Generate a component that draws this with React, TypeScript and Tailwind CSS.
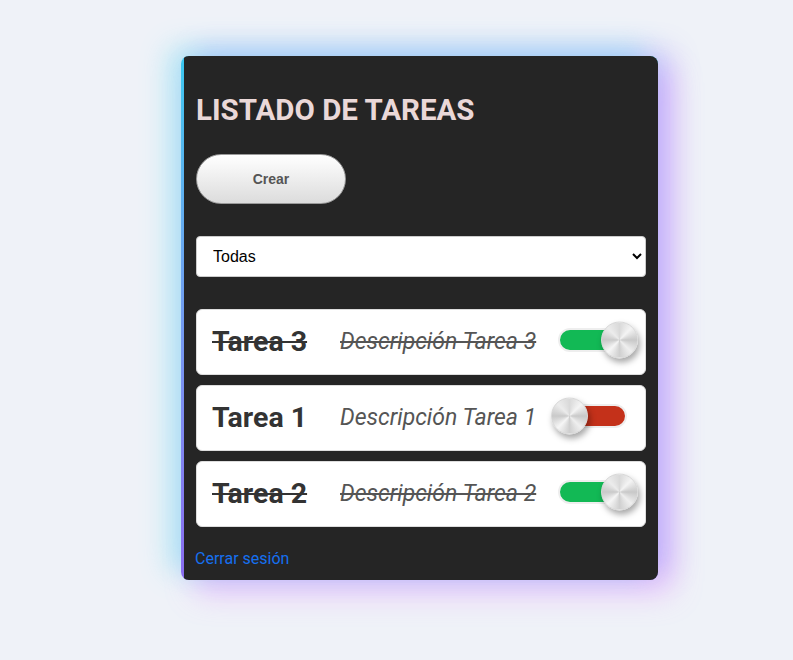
import { useState } from "react";

type Task = { id: number; title: string; desc: string; done: boolean };

const initial: Task[] = [
  { id: 3, title: "Tarea 3", desc: "Descripción Tarea 3", done: true },
  { id: 1, title: "Tarea 1", desc: "Descripción Tarea 1", done: false },
  { id: 2, title: "Tarea 2", desc: "Descripción Tarea 2", done: true },
];

function Toggle({ on, onClick }: { on: boolean; onClick: () => void }) {
  return (
    <button
      onClick={onClick}
      className={`relative mr-[18px] h-[24px] w-[69px] rounded-full border-2 border-[#eeeeee] ${
        on ? "bg-[#12b955]" : "bg-[#c4311a]"
      }`}
    >
      <span
        className={`absolute top-1/2 h-[37px] w-[37px] -translate-y-1/2 rounded-full border border-[#d8d8d8] bg-[conic-gradient(#d9d9d9,#f4f4f4,#c8c8c8,#efefef,#cfcfcf,#f6f6f6,#c9c9c9,#ececec,#d9d9d9)] shadow-[2px_4px_6px_rgba(0,0,0,0.35)] ${
          on ? "left-[41px]" : "left-[-9px]"
        }`}
      />
    </button>
  );
}

export default function App() {
  const [tasks, setTasks] = useState(initial);
  const [filter, setFilter] = useState("todas");

  const toggle = (id: number) =>
    setTasks((t) => t.map((x) => (x.id === id ? { ...x, done: !x.done } : x)));

  return (
    <div className="min-h-[660px] bg-[#eff2f8] pl-[181px] pt-[56px] font-['Roboto',sans-serif]">
      <div className="w-[477px] overflow-hidden rounded-lg bg-gradient-to-b from-[#38c8f0] to-[#8a6cf0] pl-[3px] shadow-[-12px_-8px_28px_rgba(80,215,240,0.4),14px_-6px_28px_rgba(130,110,255,0.3),14px_14px_30px_rgba(225,120,255,0.35)]">
        <div className="bg-[#252525] pb-[9px] pl-[11px] pr-[12px] pt-[38px]">
          <h1 className="pl-[1px] text-[29.5px] font-bold leading-[32px] text-[#ead8d8]">LISTADO DE TAREAS</h1>

          <button className="ml-[1px] mt-[28px] h-[50px] w-[150px] rounded-full border border-[#9a9a9a] bg-gradient-to-b from-white to-[#dcdcdc] font-['Liberation_Sans',sans-serif] text-[14px] font-bold text-[#555]">
            Crear
          </button>

          <div className="pl-[1px]">
            <select
              value={filter}
              onChange={(e) => setFilter(e.target.value)}
              className="mt-[32px] block h-[41px] w-[450px] rounded-[4px] border border-[#cccccc] bg-white px-[12px] font-['Liberation_Sans',sans-serif] text-[16px] text-black"
            >
              <option value="todas">Todas</option>
              <option value="completadas">Completadas</option>
              <option value="pendientes">Pendientes</option>
            </select>

            <div className="mt-[32px] flex flex-col gap-[10px]">
              {tasks.map((t) => (
                <div
                  key={t.id}
                  className="flex h-[66px] items-center rounded-[6px] border border-[#dddddd] bg-white pl-[15px]"
                >
                  <span
                    className={`w-[128px] text-[28.5px] font-bold text-[#333] ${t.done ? "line-through" : ""}`}
                  >
                    {t.title}
                  </span>
                  <span className={`text-[23px] italic text-[#555] ${t.done ? "line-through" : ""}`}>
                    {t.desc}
                  </span>
                  <div className="ml-auto">
                    <Toggle on={t.done} onClick={() => toggle(t.id)} />
                  </div>
                </div>
              ))}
            </div>
          </div>

          <a href="#" className="mt-[20px] block text-[16px] leading-[24px] text-[#1670f0]">
            Cerrar sesión
          </a>
        </div>
      </div>
    </div>
  );
}
